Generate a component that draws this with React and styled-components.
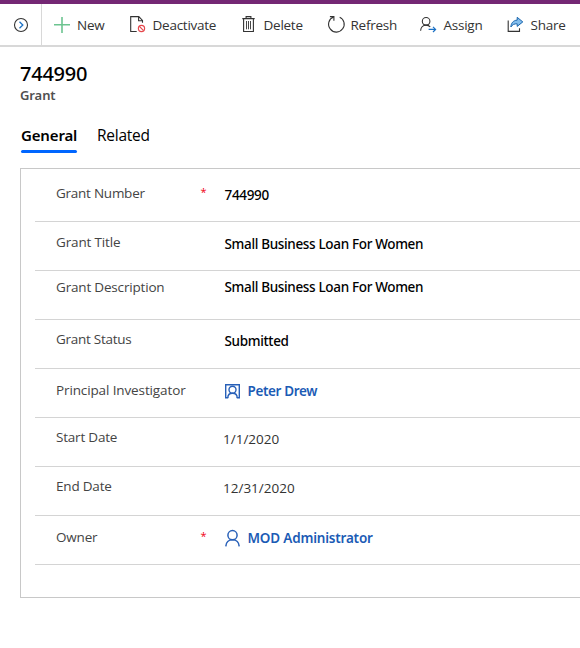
import React from "react";
import styled, { createGlobalStyle } from "styled-components";

const GlobalStyle = createGlobalStyle`
  * { box-sizing: border-box; }
  body {
    margin: 0;
    background: #fff;
    color: #333;
    font-family: "Open Sans", "Noto Sans", sans-serif;
    overflow: hidden;
  }
`;

const Page = styled.div`
  width: 580px;
  height: 648px;
  overflow: hidden;
  border-top: 4px solid #742774;
`;

const CommandBar = styled.nav`
  display: flex;
  height: 43px;
  border-bottom: 2px solid #d8d8d8;
`;

const CommandGroup = styled.div`
  display: flex;
  padding-left: 12px;
`;

const NavToggle = styled.div`
  width: 42px;
  flex: none;
  display: flex;
  align-items: center;
  padding-left: 13px;
  border-right: 1px solid #d8d8d8;
`;

const Command = styled.div`
  flex: none;
  width: ${(p) => p.$width}px;
  display: grid;
  grid-template-columns: ${(p) => p.$icon}px auto;
  align-items: center;
  justify-content: start;
`;

const CommandLabel = styled.span`
  font-size: 13.5px;
  line-height: 20px;
  letter-spacing: -0.25px;
  white-space: nowrap;
  padding-top: 1px;
`;

const Icon = styled.svg`
  display: block;
  overflow: visible;
  fill: none;
  stroke: ${(p) => p.$color || "#333"};
  stroke-width: ${(p) => p.$weight || 1.1};
`;

const Header = styled.header`
  padding: 14px 0 0 20px;
`;

const Title = styled.h1`
  margin: 0;
  font: 500 20px/26px "Noto Sans", sans-serif;
  letter-spacing: -0.25px;
  color: #000;
`;

const Subtitle = styled.div`
  font: 600 13px/16px "Noto Sans", sans-serif;
  letter-spacing: -0.1px;
  color: #505050;
`;

const Tabs = styled.div`
  display: flex;
  gap: 20px;
  padding: 22px 0 0 1px;
`;

const Tab = styled.div`
  height: 28px;
  line-height: 20px;
  white-space: nowrap;
  color: #000;
  font-size: ${(p) => (p.$active ? 15 : 15.5)}px;
  font-family: ${(p) => (p.$active ? '"Noto Sans"' : '"Open Sans"')}, sans-serif;
  font-weight: ${(p) => (p.$active ? 600 : 400)};
  letter-spacing: ${(p) => (p.$active ? -0.15 : -0.25)}px;
  width: ${(p) => p.$width}px;
`;

const TabMark = styled.div`
  height: 3px;
  margin-top: 5px;
  border-radius: 2px;
  background: #0066ff;
`;

const Panel = styled.section`
  margin: 15px 0 0 20px;
  height: 430px;
  padding: 4px 0 0 14px;
  border: 1px solid #c8c8c8;
  border-right: 0;
`;

const Row = styled.div`
  display: grid;
  grid-template-columns: 144px 23px 1fr;
  align-items: start;
  height: 49px;
  padding-left: 21px;
  border-bottom: 1px solid #d4d4d4;
  line-height: 20px;
`;

const Label = styled.span`
  padding-top: ${(p) => p.$top}px;
  font-size: 13.5px;
  letter-spacing: ${(p) => p.$track}px;
  color: #444;
  white-space: nowrap;
`;

const Required = styled.span`
  padding-top: ${(p) => p.$top - 1}px;
  padding-left: 0.5px;
  font-size: 11px;
  color: #f00010;
`;

const Value = styled.div`
  padding-top: ${(p) => p.$top}px;
  display: flex;
  align-items: flex-start;
  gap: 7px;
  white-space: nowrap;
`;

const StrongText = styled.span`
  padding-left: 1.5px;
  font: 500 13.5px/20px "Noto Sans", sans-serif;
  letter-spacing: -0.34px;
  color: #000;
`;

const DateText = styled.span`
  font-size: 13.5px;
`;

const LinkIcon = styled.span`
  padding: ${(p) => p.$top}px 0 0 2px;
`;

const LinkText = styled.span`
  padding-left: 0.5px;
  font: 600 13.5px/20px "Noto Sans", sans-serif;
  letter-spacing: ${(p) => p.$track}px;
  color: #1b5bb5;
`;

const ToggleIcon = () => (
  <Icon width="16" height="16" viewBox="0 0 16 16">
    <circle cx="8" cy="8" r="6.5" />
    <path d="M6.5 4.8 9.8 8 6.5 11.2" stroke="#1a70c4" strokeWidth="1.3" />
  </Icon>
);

const PlusIcon = () => (
  <Icon width="16" height="16" viewBox="0 0 16 16" $color="#6cc490" $weight={1.6}>
    <path d="M0 7.8h16M8 0v16" />
  </Icon>
);

const DeactivateIcon = () => (
  <Icon width="16" height="17" viewBox="0 0 16 17">
    <path d="M6.7 15.5H.7V.6h8.1l3.7 3.8v2.4M8.6.8v4h3.8" />
    <g stroke="#e5484d" strokeWidth="1.2">
      <circle cx="11.5" cy="12.5" r="3.1" />
      <path d="m9.4 10.4 4.2 4.2" />
    </g>
  </Icon>
);

const DeleteIcon = () => (
  <Icon width="13" height="17" viewBox="0 0 13 17">
    <path d="M.3 2.6h12.4M4.1 2.6V.6h4.8v2M1.6 2.6v12.9h9.8V2.6" />
    <path d="M4.5 5v8.3M6.5 5v8.3M8.5 5v8.3" strokeWidth="0.9" />
  </Icon>
);

const RefreshIcon = () => (
  <Icon width="17" height="17" viewBox="0 0 17 17" $weight={1.1}>
    <path d="M5.7 1.1A7.5 7.5 0 0 0 2.4 13.1A7.5 7.5 0 0 0 14.6 12.8A7.5 7.5 0 0 0 11.7 1.3" />
    <path d="M1.9.6h4v4.2" />
  </Icon>
);

const AssignIcon = () => (
  <Icon width="17" height="16" viewBox="0 0 17 16">
    <circle cx="6.1" cy="4.3" r="3.8" />
    <path d="M.6 13.7C.8 10.5 3 8.1 6.1 8.1c1.7 0 3.1.6 4.1 1.8" />
    <path d="M8.6 12.4h6.8M13 9.8l2.6 2.6-2.6 2.6" stroke="#1a70c4" strokeWidth="1.2" />
  </Icon>
);

const ShareIcon = () => (
  <Icon width="17" height="16" viewBox="0 0 17 16">
    <path d="M1.2 3.5v10.9h11.3v-3.1" />
    <path
      d="M10.2.3 15.8 4.9 10.2 9.4V6.8C7.4 6.7 5.2 7.6 3.9 10 4 6.2 6.2 3.4 10.2 3.1Z"
      fill="#83bdec"
      stroke="#1a66ae"
      strokeWidth="1"
    />
  </Icon>
);

const ContactIcon = () => (
  <Icon width="15" height="15" viewBox="0 0 15 15" $color="#2860b8" $weight={1.4}>
    <path d="M3.2 13.7H.7V.7h13.6v13h-2.5" />
    <circle cx="7.5" cy="5.8" r="3.5" />
    <path d="M2.8 14c0-2.8 1.9-4.7 4.7-4.7s4.7 1.9 4.7 4.7" />
  </Icon>
);

const UserIcon = () => (
  <Icon width="15" height="17" viewBox="0 0 15 17" $color="#2860b8" $weight={1.5}>
    <circle cx="7.5" cy="5.2" r="4.6" />
    <path d="M.8 16.4c.2-3.9 2.9-6.6 6.7-6.6s6.5 2.7 6.7 6.6" />
  </Icon>
);

const commands = [
  { label: "New", Glyph: PlusIcon, width: 76, icon: 23 },
  { label: "Deactivate", Glyph: DeactivateIcon, width: 112, icon: 22.5 },
  { label: "Delete", Glyph: DeleteIcon, width: 86, icon: 21.5 },
  { label: "Refresh", Glyph: RefreshIcon, width: 91.5, icon: 22.5 },
  { label: "Assign", Glyph: AssignIcon, width: 87.5, icon: 24 },
  { label: "Share", Glyph: ShareIcon, width: 73, icon: 23.5 },
];

const fields = [
  { label: "Grant Number", track: -0.25, top: 10, valueTop: 12, required: true, text: "744990" },
  { label: "Grant Title", track: -0.15, top: 10, valueTop: 12, text: "Small Business Loan For Women" },
  { label: "Grant Description", track: -0.18, top: 6, valueTop: 6, text: "Small Business Loan For Women" },
  { label: "Grant Status", track: -0.27, top: 9, valueTop: 11, text: "Submitted" },
  { label: "Principal Investigator", track: -0.12, top: 11, valueTop: 12, link: "Peter Drew", Glyph: ContactIcon, iconTop: 3, linkTrack: -0.37 },
  { label: "Start Date", track: -0.2, top: 9, valueTop: 11, date: "1/1/2020" },
  { label: "End Date", track: -0.2, top: 9, valueTop: 11, date: "12/31/2020" },
  { label: "Owner", track: -0.2, top: 11, valueTop: 12, required: true, link: "MOD Administrator", Glyph: UserIcon, iconTop: 2, linkTrack: -0.2 },
];

const FieldValue = ({ field }) => {
  if (field.link) {
    return (
      <>
        <LinkIcon $top={field.iconTop}><field.Glyph /></LinkIcon>
        <LinkText $track={field.linkTrack}>{field.link}</LinkText>
      </>
    );
  }
  return field.date ? <DateText>{field.date}</DateText> : <StrongText>{field.text}</StrongText>;
};

export default function App() {
  return (
    <>
      <GlobalStyle />
      <Page>
        <CommandBar>
          <NavToggle><ToggleIcon /></NavToggle>
          <CommandGroup>
            {commands.map(({ label, Glyph, width, icon }) => (
              <Command key={label} $width={width} $icon={icon}>
                <Glyph />
                <CommandLabel>{label}</CommandLabel>
              </Command>
            ))}
          </CommandGroup>
        </CommandBar>
        <Header>
          <Title>744990</Title>
          <Subtitle>Grant</Subtitle>
          <Tabs>
            <Tab $active $width={56}>General<TabMark /></Tab>
            <Tab $width={53}>Related</Tab>
          </Tabs>
        </Header>
        <Panel>
          {fields.map((field) => (
            <Row key={field.label}>
              <Label $top={field.top} $track={field.track}>{field.label}</Label>
              <Required $top={field.top}>{field.required ? "*" : ""}</Required>
              <Value $top={field.valueTop}><FieldValue field={field} /></Value>
            </Row>
          ))}
        </Panel>
      </Page>
    </>
  );
}
